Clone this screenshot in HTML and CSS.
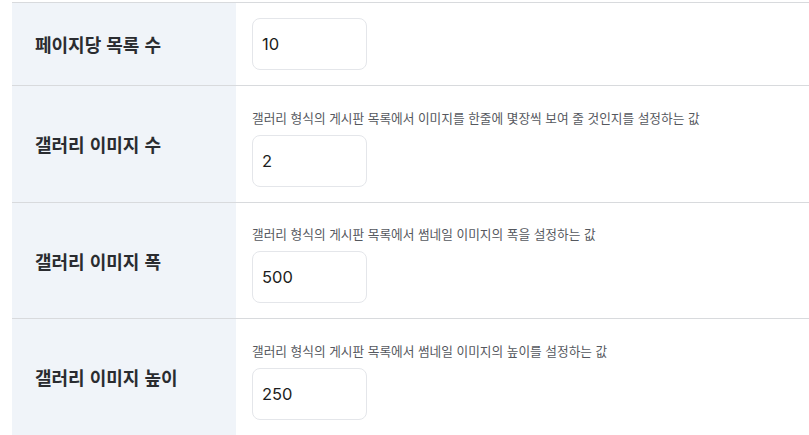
FILE: index.html
```html
<!DOCTYPE html>
<html lang="ko">
<head>
<meta charset="utf-8">
<title>게시판 설정</title>
<link rel="stylesheet" href="styles.css">
</head>
<body>
<div class="settings">
  <div class="row">
    <div class="label">페이지당 목록 수</div>
    <div class="value">
      <input class="field" type="text" value="10">
    </div>
  </div>
  <div class="row">
    <div class="label">갤러리 이미지 수</div>
    <div class="value">
      <p class="desc">갤러리 형식의 게시판 목록에서 이미지를 한줄에 몇장씩 보여 줄 것인지를 설정하는 값</p>
      <input class="field" type="text" value="2">
    </div>
  </div>
  <div class="row">
    <div class="label">갤러리 이미지 폭</div>
    <div class="value">
      <p class="desc">갤러리 형식의 게시판 목록에서 썸네일 이미지의 폭을 설정하는 값</p>
      <input class="field" type="text" value="500">
    </div>
  </div>
  <div class="row">
    <div class="label">갤러리 이미지 높이</div>
    <div class="value">
      <p class="desc">갤러리 형식의 게시판 목록에서 썸네일 이미지의 높이를 설정하는 값</p>
      <input class="field" type="text" value="250">
    </div>
  </div>
</div>
</body>
</html>
```

FILE: styles.css
```css
html, body {
  margin: 0;
  padding: 0;
  background: #ffffff;
  overflow: hidden;
}

body {
  padding: 2px 0 0 12px;
  font-family: "Noto Sans CJK KR", "Noto Sans", sans-serif;
  color: #222428;
}

.settings {
  border-top: 1px solid #d8dadd;
}

.row {
  display: grid;
  grid-template-columns: 224px 1fr;
  border-bottom: 1px solid #d8dadd;
}

.label {
  background: #f0f4f9;
  display: flex;
  align-items: center;
  padding-left: 23px;
  font-size: 18px;
  font-weight: 600;
  color: #2a2c30;
}

.value {
  padding: 15px 16px;
  display: flex;
  flex-direction: column;
  align-items: flex-start;
}

.desc {
  margin: 5.7px 0 6px;
  font-size: 12.7px;
  line-height: 22px;
  color: #55585e;
}

.field {
  box-sizing: border-box;
  width: 115px;
  height: 52px;
  padding: 0 9px;
  border: 1px solid #e4e6ea;
  border-radius: 8px;
  background: #fff;
  font-family: Inter, "Noto Sans", sans-serif;
  font-size: 16.5px;
  color: #1c1d20;
  outline: none;
}
```
